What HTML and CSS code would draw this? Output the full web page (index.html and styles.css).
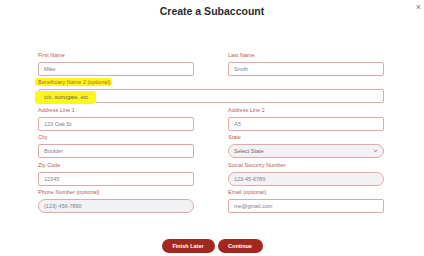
FILE: index.html
```html
<!DOCTYPE html>
<html>
<head>
  <meta charset="UTF-8">
  <title>Create a Subaccount</title>
  <link rel="stylesheet" href="styles.css">
</head>
<body>
  <div class="modal">
    <button class="close-button">×</button>
    <h1 class="title">Create a Subaccount</h1>

    <form class="form">
      <div class="field">
        <label>First Name</label>
        <input class="input" type="text" value="Mike">
      </div>
      <div class="field">
        <label>Last Name</label>
        <input class="input" type="text" value="Smith">
      </div>

      <div class="field wide">
        <label><span class="mark">Beneficiary Name 2 (optional)</span></label>
        <div class="input"><span class="mark mark-value">c/o, surrogate, etc</span></div>
      </div>

      <div class="field">
        <label>Address Line 1</label>
        <input class="input" type="text" value="123 Oak St">
      </div>
      <div class="field">
        <label>Address Line 2</label>
        <input class="input" type="text" value="A5">
      </div>

      <div class="field">
        <label>City</label>
        <input class="input" type="text" value="Boulder">
      </div>
      <div class="field">
        <label>State</label>
        <div class="select-wrap">
          <select class="input pill">
            <option>Select State</option>
          </select>
          <svg class="chevron" width="5" height="4" viewBox="0 0 5 4">
            <path d="M0.8 1 L2.5 2.7 L4.2 1" fill="none" stroke="#555" stroke-width="0.8"/>
          </svg>
        </div>
      </div>

      <div class="field">
        <label>Zip Code</label>
        <input class="input" type="text" value="12345">
      </div>
      <div class="field">
        <label>Social Security Number</label>
        <input class="input pill" type="text" value="123-45-6789">
      </div>

      <div class="field">
        <label>Phone Number (optional)</label>
        <input class="input pill" type="text" value="(123) 456-7890">
      </div>
      <div class="field">
        <label>Email (optional)</label>
        <input class="input" type="text" value="me@gmail.com">
      </div>
    </form>

    <div class="actions">
      <button class="action-button finish">Finish Later</button>
      <button class="action-button continue">Continue</button>
    </div>
  </div>
</body>
</html>
```

FILE: styles.css
```css
:root {
  --label-color: #bb5c54;
  --border-color: #dfaaa5;
  --value-color: #7b8290;
  --pill-bg: #f2f2f5;
  --button-color: #a2281f;
  --mark-color: #fbf71c;
}

body {
  width: 424px;
  height: 256px;
  margin: 0;
  background: #ffffff;
  font-family: "Liberation Sans", Arial, sans-serif;
  overflow: hidden;
}

.modal {
  position: relative;
  padding-top: 5px;
}

.title {
  margin: 0;
  font-size: 10.5px;
  line-height: 12px;
  font-weight: bold;
  text-align: center;
  color: #2a2a2e;
}

.close-button {
  position: absolute;
  top: 2px;
  right: 3px;
  background: none;
  border: none;
  padding: 0;
  font-family: inherit;
  font-size: 9px;
  line-height: 10px;
  color: #777;
  cursor: pointer;
}

.form {
  display: grid;
  grid-template-columns: 156px 156px;
  column-gap: 34px;
  row-gap: 2.4px;
  margin: 34px 0 0 38px;
}

.field.wide {
  grid-column: 1 / -1;
}

.field label {
  display: block;
  font-size: 5.5px;
  line-height: 8px;
  color: var(--label-color);
  margin-bottom: 3px;
}

.input {
  display: block;
  box-sizing: border-box;
  width: 100%;
  height: 14px;
  margin: 0;
  padding: 0 5px;
  border: 1px solid var(--border-color);
  border-radius: 2px;
  background: #ffffff;
  font-family: inherit;
  font-size: 5.5px;
  line-height: 12px;
  color: var(--value-color);
  outline: none;
}

.input.pill {
  border-radius: 7px;
  background: var(--pill-bg);
}

select.input {
  appearance: none;
  -webkit-appearance: none;
  color: #6a5f66;
}

.select-wrap {
  position: relative;
}

.chevron {
  position: absolute;
  right: 6px;
  top: 5px;
}

/* highlighter marks */
.mark {
  background: var(--mark-color);
  border-radius: 3px;
  padding: 1px 2px 1px 3px;
  margin-left: -3px;
}

.mark-value {
  display: inline-block;
  line-height: 13px;
  margin-left: -9px;
  margin-top: 1px;
  padding: 0 8px 0 9px;
  color: #5d6170;
}

.actions {
  display: flex;
  justify-content: center;
  gap: 3px;
  margin-top: 26px;
}

.action-button {
  height: 14px;
  padding: 0;
  border: none;
  border-radius: 7px;
  background: var(--button-color);
  color: #ffffff;
  font-family: inherit;
  font-size: 5.5px;
  font-weight: bold;
  cursor: pointer;
}

.finish {
  width: 53px;
}

.continue {
  width: 45px;
}
```
